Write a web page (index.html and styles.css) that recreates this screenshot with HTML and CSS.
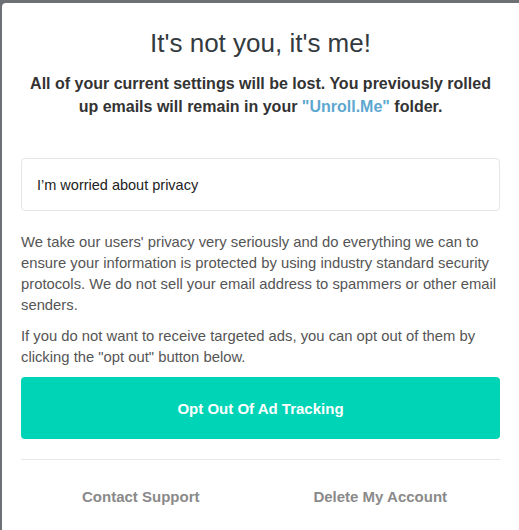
FILE: index.html
```html
<!DOCTYPE html>
<html>
<head>
<meta charset="utf-8">
<link rel="stylesheet" href="styles.css">
</head>
<body>
<div class="modal">
  <h1 class="title">It's not you, it's me!</h1>
  <p class="lead">All of your current settings will be lost. You previously rolled up emails will remain in your <span class="brand">"Unroll.Me"</span> folder.</p>
  <div class="reason">I’m worried about privacy</div>
  <p class="copy">We take our users' privacy very seriously and do everything we can to ensure your information is protected by using industry standard security protocols. We do not sell your email address to spammers or other email senders.</p>
  <p class="copy">If you do not want to receive targeted ads, you can opt out of them by clicking the "opt out" button below.</p>
  <button class="cta">Opt Out Of Ad Tracking</button>
  <hr class="rule">
  <div class="footer">
    <a class="foot-link">Contact Support</a>
    <a class="foot-link">Delete My Account</a>
  </div>
</div>
</body>
</html>
```
FILE: styles.css
```css
html, body {
  margin: 0;
  padding: 0;
  background: #6d7175;
  height: 100%;
  overflow: hidden;
}
body {
  font-family: "Liberation Sans", Arial, sans-serif;
}
.modal {
  margin: 3px 0 0 2px;
  background: #fff;
  border-top-left-radius: 4px;
  padding: 24px 19px 0 19px;
  height: 527px;
  box-sizing: border-box;
}
.title {
  margin: 0;
  text-align: center;
  font-size: 26px;
  font-weight: normal;
  color: #333a40;
  line-height: 32px;
}
.lead {
  margin: 13px 0 0;
  padding: 0 6px;
  text-align: center;
  font-size: 16px;
  font-weight: bold;
  line-height: 23px;
  color: #333;
}
.brand {
  color: #5da7d1;
}
.reason {
  margin-top: 40px;
  border: 1px solid #e6e6e6;
  border-radius: 4px;
  box-sizing: border-box;
  height: 53px;
  padding: 0 15px;
  display: flex;
  align-items: center;
  font-size: 14.5px;
  color: #222;
}
.copy {
  margin: 21px 0 0;
  font-size: 14.8px;
  line-height: 21px;
  color: #555;
}
.copy + .copy {
  margin-top: 10px;
}
.cta {
  display: block;
  width: 100%;
  margin-top: 9px;
  height: 62px;
  border: 0;
  border-radius: 4px;
  background: #00d4b7;
  color: #fff;
  font-family: "Liberation Sans", Arial, sans-serif;
  font-size: 15px;
  font-weight: bold;
}
.rule {
  margin: 20px 0 0;
  border: 0;
  border-top: 1px solid #e8e8e8;
}
.footer {
  display: grid;
  grid-template-columns: 1fr 1fr;
  padding-top: 28px;
}
.foot-link {
  text-align: center;
  font-size: 15px;
  font-weight: bold;
  color: #8a8a8a;
}
```
